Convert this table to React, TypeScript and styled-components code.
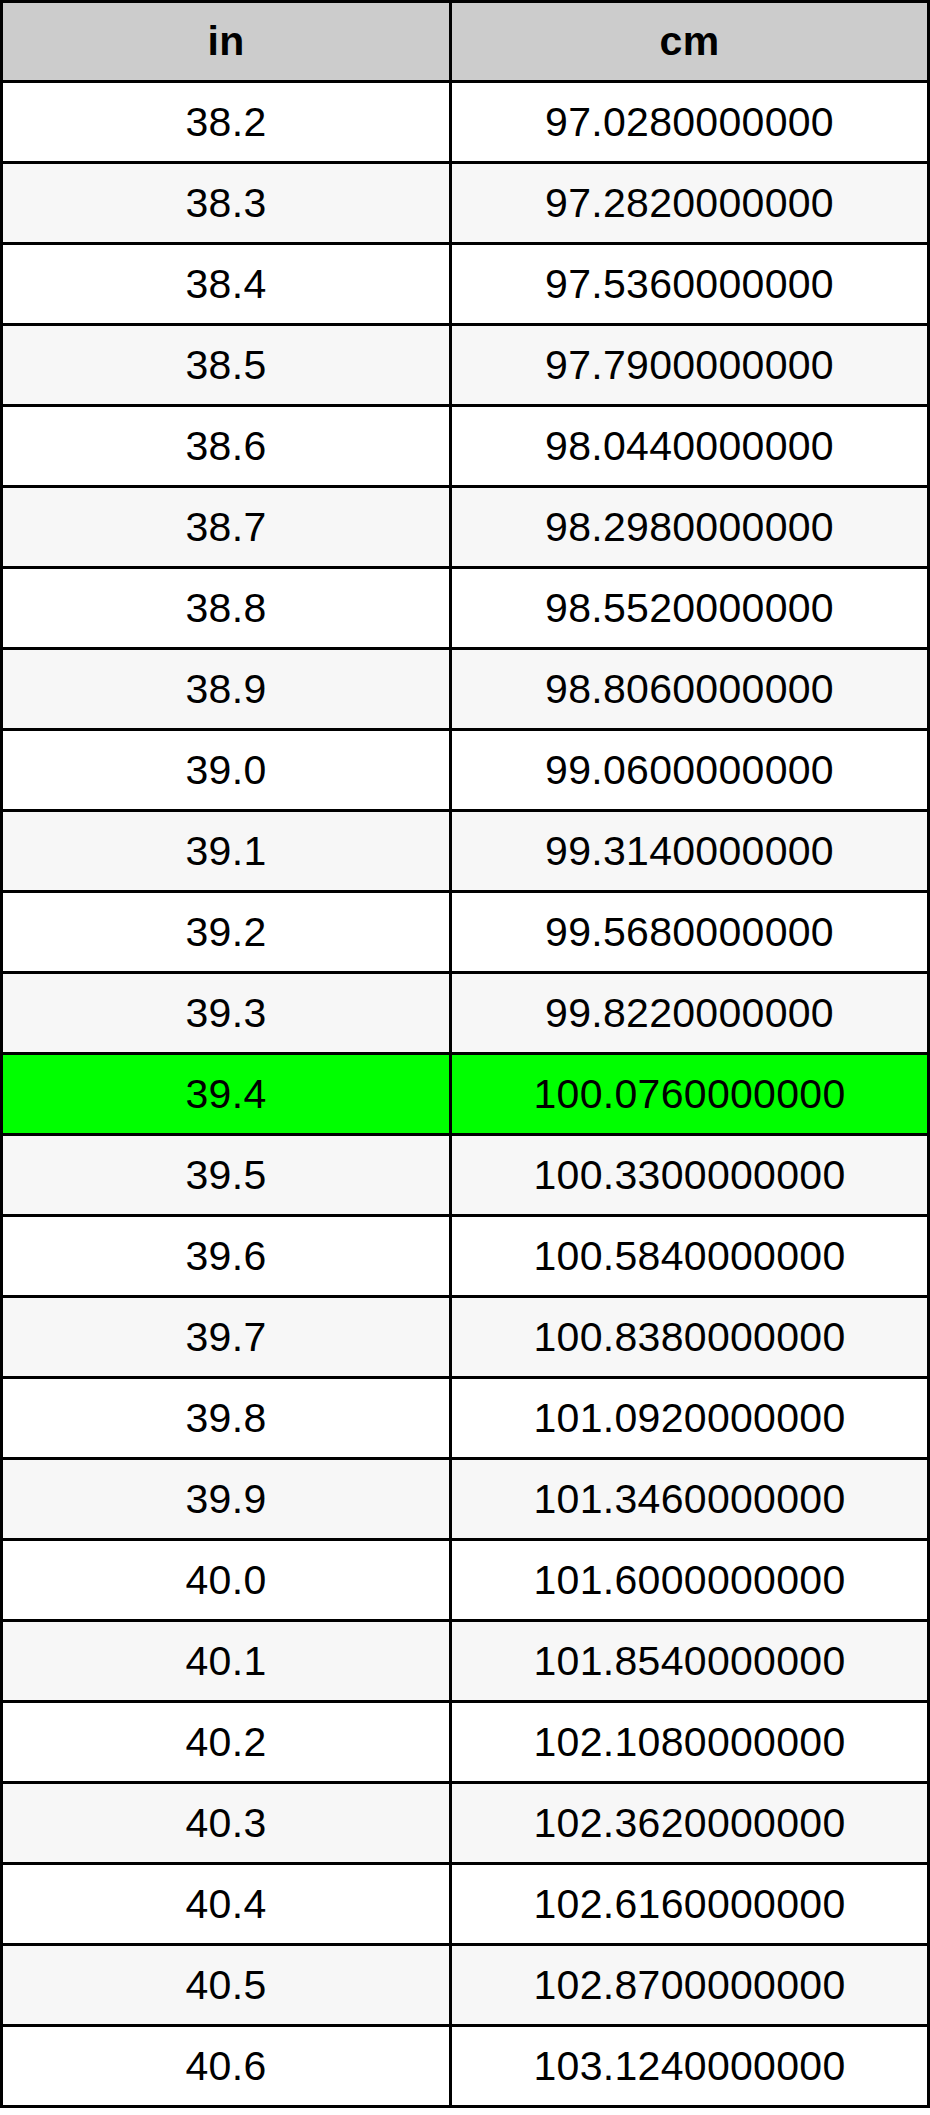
import styled, { createGlobalStyle } from 'styled-components';

const GlobalStyle = createGlobalStyle`
  body {
    margin: 0;
    background: #fff;
    font-family: "Liberation Sans", Arial, sans-serif;
  }
`;

const rows = Array.from({ length: 25 }, (_, i) => {
  const tenths = 382 + i;
  const thousandths = tenths * 254;
  const whole = Math.floor(thousandths / 1000);
  const frac = String(thousandths % 1000).padStart(3, '0');
  return {
    inch: (tenths / 10).toFixed(1),
    cm: `${whole}.${frac}0000000`,
    highlight: tenths === 394,
  };
});

export default function App() {
  return (
    <>
      <GlobalStyle />
      <Table>
        <Row>
          <HeadCell>in</HeadCell>
          <HeadCell>cm</HeadCell>
        </Row>
        {rows.map((r, i) => {
          const bg = r.highlight ? '#00ff00' : i % 2 === 1 ? '#f7f7f7' : '#ffffff';
          return (
            <Row key={r.inch}>
              <Cell $bg={bg}>{r.inch}</Cell>
              <Cell $bg={bg}>{r.cm}</Cell>
            </Row>
          );
        })}
      </Table>
    </>
  );
}

const Table = styled.div`
  width: 930px;
  box-sizing: border-box;
  display: flex;
  flex-direction: column;
  gap: 3px;
  padding: 3px;
  background: #000;
`;

const Row = styled.div`
  display: grid;
  grid-template-columns: 446px 475px;
  gap: 3px;
`;

const Cell = styled.div<{ $bg: string }>`
  height: 78px;
  display: flex;
  align-items: center;
  justify-content: center;
  background: ${p => p.$bg};
  color: #000;
  font-size: 41px;
  letter-spacing: 0.3px;
`;

const HeadCell = styled(Cell).attrs({ $bg: '#cccccc' })`
  height: 77px;
  font-weight: bold;
`;
